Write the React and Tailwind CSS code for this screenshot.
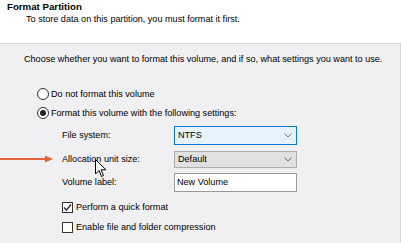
import React from 'react';

const font = { fontFamily: '"Liberation Sans", Arial, sans-serif' };

function Chevron() {
  return (
    <svg width="8" height="5" viewBox="0 0 8 5" className="shrink-0">
      <path d="M0.5 0.5 L4 4 L7.5 0.5" fill="none" stroke="#6b6b6b" strokeWidth="1" />
    </svg>
  );
}

function Radio({ checked, label }) {
  return (
    <div className="flex items-center h-[12px]">
      <span className="w-[12px] h-[12px] rounded-full border border-[#333] bg-white flex items-center justify-center">
        {checked && <span className="w-[6px] h-[6px] rounded-full bg-[#222]" />}
      </span>
      <span className="ml-[2px] leading-[12px]">{label}</span>
    </div>
  );
}

function Check({ checked, label }) {
  return (
    <div className="flex items-center h-[11px]">
      <span className="w-[11px] h-[11px] border border-[#333] bg-white flex items-center justify-center">
        {checked && (
          <svg width="9" height="9" viewBox="0 0 9 9">
            <path d="M1 4.5 L3.5 7 L8 1.5" fill="none" stroke="#222" strokeWidth="1.2" />
          </svg>
        )}
      </span>
      <span className="ml-[3px] leading-[11px]">{label}</span>
    </div>
  );
}

function FieldRow({ label, children, className = '' }) {
  return (
    <div className={`flex items-center ${className}`}>
      <span className="w-[112px] leading-[11px]">{label}</span>
      {children}
    </div>
  );
}

export default function App() {
  return (
    <div className="relative w-[401px] h-[243px] overflow-hidden text-[9.1px] text-black bg-[#f0eff1]" style={font}>
      {/* header */}
      <div className="h-[43px] bg-white pt-[1px] pl-[7px]">
        <div className="font-bold text-[9.7px] leading-[11px]">Format Partition</div>
        <div className="mt-[2px] pl-[19px] leading-[11px]">To store data on this partition, you must format it first.</div>
      </div>
      <div className="h-px bg-[#d4d4d4]" />

      {/* body */}
      <div className="h-[199px] pt-[10px] border-r border-[#d8d8d8]">
        <div className="pl-[24px] leading-[11px]">
          Choose whether you want to format this volume, and if so, what settings you want to use.
        </div>

        <div className="pl-[37px] mt-[23px] flex flex-col gap-[7px]">
          <Radio label="Do not format this volume" />
          <Radio checked label="Format this volume with the following settings:" />
        </div>

        <div className="pl-[62px] mt-[7px] flex flex-col">
          <FieldRow label="File system:">
            <div className="w-[123px] h-[19px] border border-[#0078d7] bg-[#e5f1fb] flex items-center justify-between pl-[3px] pr-[4px]">
              <span>NTFS</span>
              <Chevron />
            </div>
          </FieldRow>
          <FieldRow label="Allocation unit size:" className="mt-[6px]">
            <div className="w-[123px] h-[17px] border border-[#adadad] bg-[#e1e1e1] flex items-center justify-between pl-[3px] pr-[4px]">
              <span>Default</span>
              <Chevron />
            </div>
          </FieldRow>
          <FieldRow label="Volume label:" className="mt-[5px]">
            <div className="w-[123px] h-[19px] border border-[#9a9a9a] bg-white flex items-center pl-[2px]">
              <span>New Volume</span>
            </div>
          </FieldRow>

          <div className="mt-[10px] flex flex-col gap-[9px]">
            <Check checked label="Perform a quick format" />
            <Check label="Enable file and folder compression" />
          </div>
        </div>
      </div>

      {/* annotation arrow */}
      <svg className="absolute left-0 top-[154px]" width="56" height="10" viewBox="0 0 56 10">
        <line x1="0" y1="5" x2="48" y2="5" stroke="#e5603b" strokeWidth="2" />
        <path d="M45 1.5 L53 5 L45 8.5 Z" fill="#e5603b" />
      </svg>

      {/* mouse cursor */}
      <svg className="absolute left-[95px] top-[159px]" width="12" height="19" viewBox="0 0 12 19">
        <path d="M0.5 0.5 L0.5 15 L4 11.5 L6.5 17.5 L8.5 16.5 L6 10.8 L11 10.8 Z" fill="white" stroke="black" strokeWidth="1" strokeLinejoin="round" />
      </svg>
    </div>
  );
}
